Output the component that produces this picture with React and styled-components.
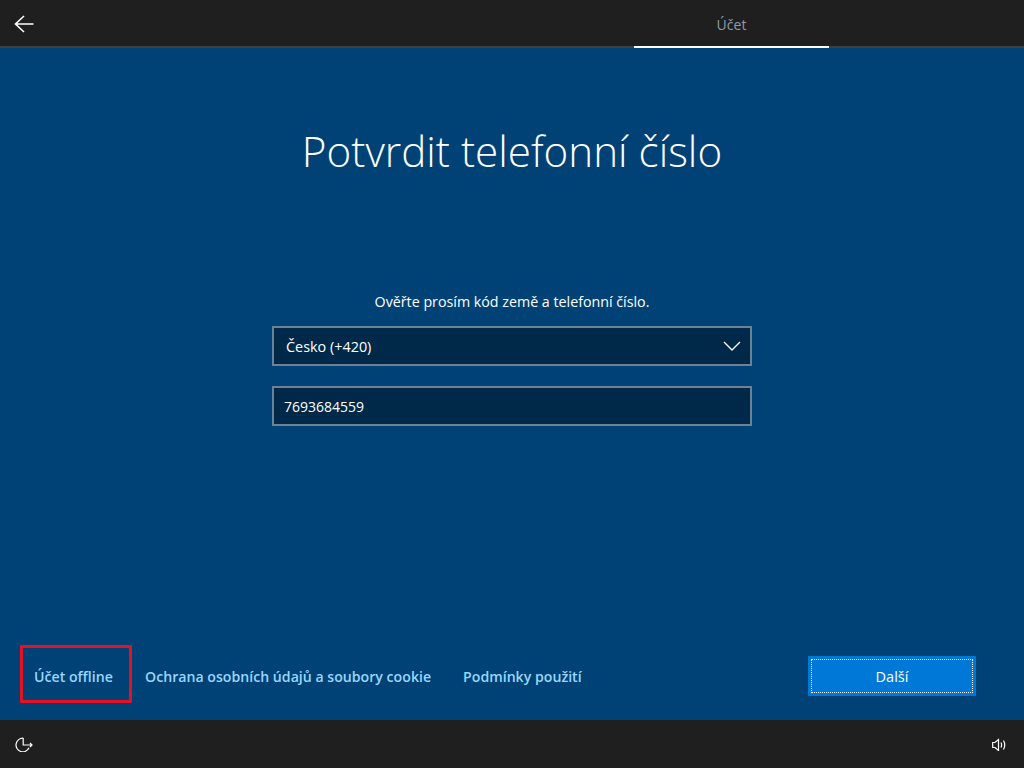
import React from 'react'
import styled, { createGlobalStyle } from 'styled-components'

const GlobalStyle = createGlobalStyle`
  html, body {
    margin: 0;
    height: 100%;
    background: #004275;
  }
  #root {
    height: 100%;
  }
  * {
    box-sizing: border-box;
  }
`

const Page = styled.div`
  height: 768px;
  display: flex;
  flex-direction: column;
  background: #004275;
  color: #fff;
  font-family: "Open Sans", "Noto Sans", sans-serif;
`

const TopBar = styled.header`
  height: 48px;
  flex: none;
  display: flex;
  background: #1f1f1f;
  border-bottom: 2px solid #3f3f3f;
`

const BackButton = styled.button`
  width: 48px;
  height: 46px;
  padding: 2px 0 0;
  border: none;
  background: none;
  display: flex;
  align-items: center;
  justify-content: center;
`

const Steps = styled.nav`
  flex: 1;
  display: flex;
  padding-left: 586px;
`

const Step = styled.div`
  width: 195px;
  height: 48px;
  padding-top: 2px;
  border-bottom: 2px solid #fff;
  display: flex;
  align-items: center;
  justify-content: center;
  color: #8f9ca8;
  font-size: 14px;
`

const Main = styled.main`
  flex: 1;
  display: flex;
  flex-direction: column;
  align-items: center;
`

const Title = styled.h1`
  margin: 71px 0 0;
  font-size: 42.2px;
  line-height: 64px;
  font-weight: 300;
  white-space: nowrap;
`

const Form = styled.form`
  width: 480px;
  margin-top: 109px;
  display: flex;
  flex-direction: column;
`

const Prompt = styled.p`
  margin: 0 0 14px;
  font-size: 14.25px;
  line-height: 20px;
  text-align: center;
`

const Field = styled.div`
  height: 40px;
  margin-bottom: 20px;
  padding: 0 ${props => props.$select ? '9px' : '10px'} 0 ${props => props.$select ? '12px' : '10px'};
  display: flex;
  align-items: center;
  justify-content: space-between;
  background: #002849;
  border: 2px solid #6b8296;
  font-size: ${props => props.$select ? '14.4px' : '14px'};
  color: #fff;
`

const Footer = styled.div`
  height: 75px;
  flex: none;
  padding: 0 48px 0 20px;
  display: flex;
  align-items: flex-start;
  justify-content: space-between;
`

const Links = styled.div`
  display: flex;
  align-items: center;
  height: 58px;
`

const FooterLink = styled.a`
  margin: 4px 32px 0 0;
  color: #99d6ff;
  font-size: 14.15px;
  font-weight: 600;
  white-space: nowrap;
`

const MarkedLink = styled(FooterLink)`
  width: 112px;
  height: 58px;
  margin: 0 13px 0 0;
  padding: 4px 0 0 11px;
  display: flex;
  align-items: center;
  border: 3px solid #e81123;
  border-radius: 1px;
`

const NextButton = styled.button`
  width: 168px;
  height: 40px;
  margin-top: 11px;
  background: #0078d7;
  border: 3px solid #0078d7;
  outline: 1px dotted #fff;
  outline-offset: -4px;
  color: #fff;
  font-family: inherit;
  font-size: 14.5px;
`

const BottomBar = styled.footer`
  height: 48px;
  flex: none;
  padding: 0 18px 0 15px;
  display: flex;
  align-items: center;
  justify-content: space-between;
  background: #1f1f1f;
`

const BarIcon = styled.svg`
  display: block;
  fill: none;
  stroke: #fff;
  stroke-width: 1.2;
`

const BackIcon = () => (
  <svg width="20" height="18" viewBox="0 0 20 18" fill="none" stroke="#fff" strokeWidth="1.6">
    <path d="M10 1 L1.5 9 L10 17 M1.5 9 H19.5" />
  </svg>
)

const ChevronIcon = () => (
  <svg width="18" height="10" viewBox="0 0 18 10" fill="none" stroke="#fff" strokeWidth="1.4">
    <path d="M1 1 L9 9 L17 1" />
  </svg>
)

const EaseIcon = () => (
  <BarIcon width="18" height="16" viewBox="0 0 18 16">
    <path d="M8.2 2.2 A6.8 6.8 0 1 0 14 11.8" />
    <path d="M8.2 2 V9 H17 M15 7 L17 9 L15 11" />
  </BarIcon>
)

const VolumeIcon = () => (
  <BarIcon width="14" height="14" viewBox="0 0 14 14">
    <path d="M0.7 5.5 H3 L6.5 2.5 V13.5 L3 10.5 H0.7 Z" />
    <path d="M9 5.5 Q10.2 8 9 10.5 M11.5 3.5 Q14 8 11.5 12.5" />
  </BarIcon>
)

export default function App() {
  return (
    <Page>
      <GlobalStyle />
      <TopBar>
        <BackButton type="button" aria-label="Zpět">
          <BackIcon />
        </BackButton>
        <Steps>
          <Step>Účet</Step>
        </Steps>
      </TopBar>
      <Main>
        <Title>Potvrdit telefonní číslo</Title>
        <Form>
          <Prompt>Ověřte prosím kód země a telefonní číslo.</Prompt>
          <Field $select>
            Česko (+420)
            <ChevronIcon />
          </Field>
          <Field>7693684559</Field>
        </Form>
      </Main>
      <Footer>
        <Links>
          <MarkedLink>Účet offline</MarkedLink>
          <FooterLink>Ochrana osobních údajů a soubory cookie</FooterLink>
          <FooterLink>Podmínky použití</FooterLink>
        </Links>
        <NextButton type="button">Další</NextButton>
      </Footer>
      <BottomBar>
        <EaseIcon />
        <VolumeIcon />
      </BottomBar>
    </Page>
  )
}
